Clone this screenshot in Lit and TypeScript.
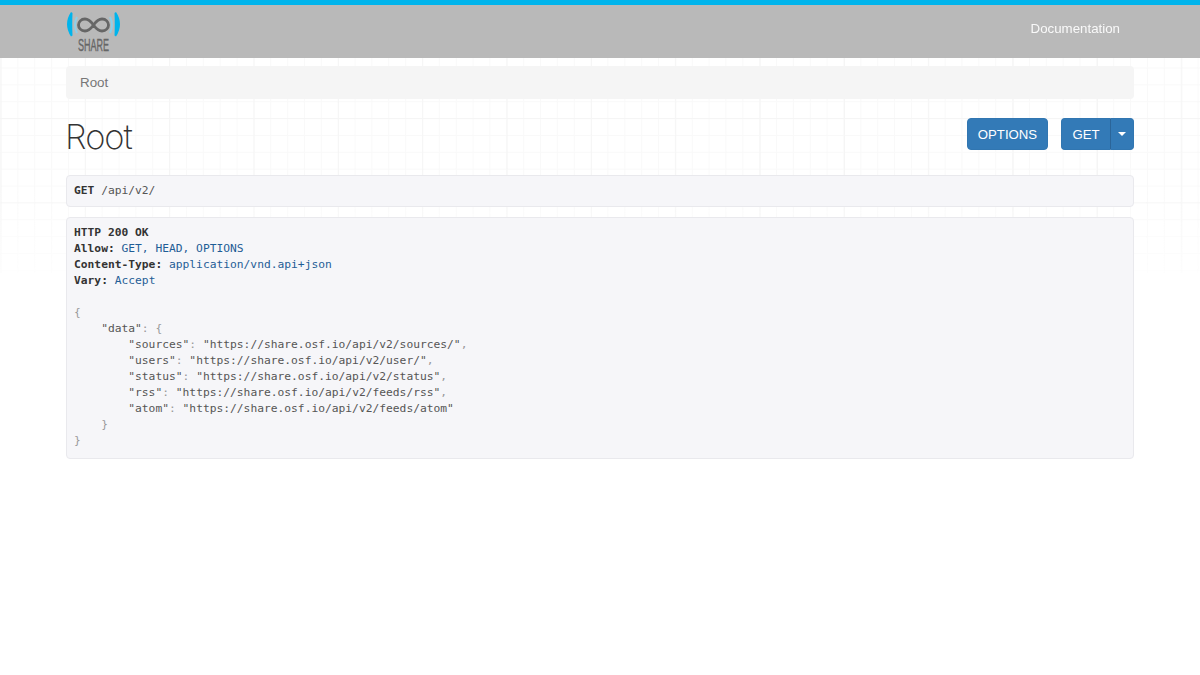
import { LitElement, html, css } from "lit";
import { customElement } from "lit/decorators.js";

@customElement("app-root")
export class AppRoot extends LitElement {
  static styles = css`
    :host { display: block; position: relative; min-height: 675px; background: #fff; font-family: "Liberation Sans", Arial, sans-serif; color: #333; overflow: hidden; }
    .grid { position: absolute; left: 0; right: 0; top: 58px; height: 215px; z-index: 0;
      background-image:
        linear-gradient(to right, #f5f5f5 1px, transparent 1px),
        linear-gradient(to bottom, #f5f5f5 1px, transparent 1px),
        linear-gradient(to right, #f9f9f9 1px, transparent 1px),
        linear-gradient(to bottom, #f9f9f9 1px, transparent 1px);
      background-size: 84.35px 84.35px, 84.35px 84.35px, 16.87px 16.87px, 16.87px 16.87px;
      background-position: 0.5px 60px, 0.5px 60px, 0.5px 9.5px, 0.5px 9.5px;
      -webkit-mask-image: linear-gradient(to bottom, #000 60%, rgba(0,0,0,.3) 100%);
      mask-image: linear-gradient(to bottom, #000 60%, rgba(0,0,0,.3) 100%);
    }
    .nav { position: relative; z-index: 1; height: 53px; background: #b9b9b9; border-top: 5px solid #00b4ec; display: flex; align-items: flex-start; justify-content: space-between; padding: 0 80px 0 66px; }
    .logo { display: block; }
    .logo text { font-family: "Liberation Sans", sans-serif; font-size: 17px; fill: #666; stroke: #666; stroke-width: 0.35px; }
    .doc { color: #fff; font-size: 13.3px; line-height: 20px; margin-top: 14px; opacity: .92; }
    main { position: relative; z-index: 1; padding: 8px 66px 0; }
    .crumb { height: 33px; box-sizing: border-box; background: #f5f5f5; border-radius: 4px; padding: 0 14px; font-size: 13.4px; line-height: 33px; color: #777; }
    .head { display: flex; justify-content: space-between; align-items: flex-start; height: 76px; }
    h1 { margin: 18px 0 0 -1px; font-family: Inter, sans-serif; font-weight: 200; font-size: 34.5px; line-height: 40px; letter-spacing: -1px; color: #333; }
    .actions { display: flex; gap: 13px; margin-top: 19px; }
    .btn { height: 32px; box-sizing: border-box; background: #337ab7; border: 1px solid #3176b1; color: #fff; font-size: 13.2px; line-height: 32px; border-radius: 4px; text-align: center; font-family: "Liberation Sans", sans-serif; }
    .options { width: 81px; }
    .split { display: flex; }
    .get { width: 49px; border-radius: 4px 0 0 4px; border-right: 0; }
    .caret-btn { width: 24px; border-radius: 0 4px 4px 0; display: flex; align-items: center; justify-content: center; border-left: 1px solid #2b6599; }
    .caret { width: 0; height: 0; border-top: 4px solid #fff; border-left: 4px solid transparent; border-right: 4px solid transparent; }
    pre { margin: 0; background: #f6f6f9; border: 1px solid #e9e9ed; border-radius: 4px; padding: 7px 7px; font-family: "DejaVu Sans Mono", monospace; font-size: 11.27px; line-height: 16px; color: #555; white-space: pre; }
    .req { height: 32px; box-sizing: border-box; margin-bottom: 10px; }
    .res { height: 242px; box-sizing: border-box; }
    b { color: #333; font-weight: bold; }
    .v { color: #1f5d96; }
    .p { color: #999; }
    .s { color: #555; }
  `;

  render() {
    return html`
      <div class="grid"></div>
      <header class="nav">
        <svg class="logo" width="56" height="53" viewBox="66 5 56 53" aria-label="SHARE logo">
          <path d="M71 12Q63 24 71 36.5L72.5 35.5Q72 24 72.5 13Z" fill="#00b4ec"/>
          <path d="M116 12Q124 24 116 36.5L114.5 35.5Q115 24 114.5 13Z" fill="#00b4ec"/>
          <path d="M77 17Q73 25 77 33" fill="none" stroke="#8fcfe8" stroke-width="2"/>
          <path d="M110 17Q114 25 110 33" fill="none" stroke="#8fcfe8" stroke-width="2"/>
          <path d="M93.5 25C91 21.5 88.5 19 85 19C81 19 78.5 22 78.5 25C78.5 28 81 31 85 31C88.5 31 91 28.5 93.5 25C96 21.5 98.5 19 102 19C106 19 108.5 22 108.5 25C108.5 28 106 31 102 31C98.5 31 96 28.5 93.5 25Z" fill="none" stroke="#666" stroke-width="2.8"/>
          <g transform="translate(78 50.5) scale(.53 1)"><text>SHARE</text></g>
        </svg>
        <div class="doc">Documentation</div>
      </header>
      <main>
        <div class="crumb">Root</div>
        <div class="head">
          <h1>Root</h1>
          <div class="actions">
            <div class="btn options">OPTIONS</div>
            <div class="split">
              <div class="btn get">GET</div>
              <div class="btn caret-btn"><span class="caret"></span></div>
            </div>
          </div>
        </div>
        <pre class="req"><b>GET</b> /api/v2/</pre>
        <pre class="res"><b>HTTP 200 OK</b>
<b>Allow:</b> <span class="v">GET, HEAD, OPTIONS</span>
<b>Content-Type:</b> <span class="v">application/vnd.api+json</span>
<b>Vary:</b> <span class="v">Accept</span>

<span class="p">{</span>
    <span class="s">"data"</span><span class="p">: {</span>
        <span class="s">"sources"</span><span class="p">:</span> <span class="s">"https://share.osf.io/api/v2/sources/"</span><span class="p">,</span>
        <span class="s">"users"</span><span class="p">:</span> <span class="s">"https://share.osf.io/api/v2/user/"</span><span class="p">,</span>
        <span class="s">"status"</span><span class="p">:</span> <span class="s">"https://share.osf.io/api/v2/status"</span><span class="p">,</span>
        <span class="s">"rss"</span><span class="p">:</span> <span class="s">"https://share.osf.io/api/v2/feeds/rss"</span><span class="p">,</span>
        <span class="s">"atom"</span><span class="p">:</span> <span class="s">"https://share.osf.io/api/v2/feeds/atom"</span>
    <span class="p">}</span>
<span class="p">}</span></pre>
      </main>
    `;
  }
}
